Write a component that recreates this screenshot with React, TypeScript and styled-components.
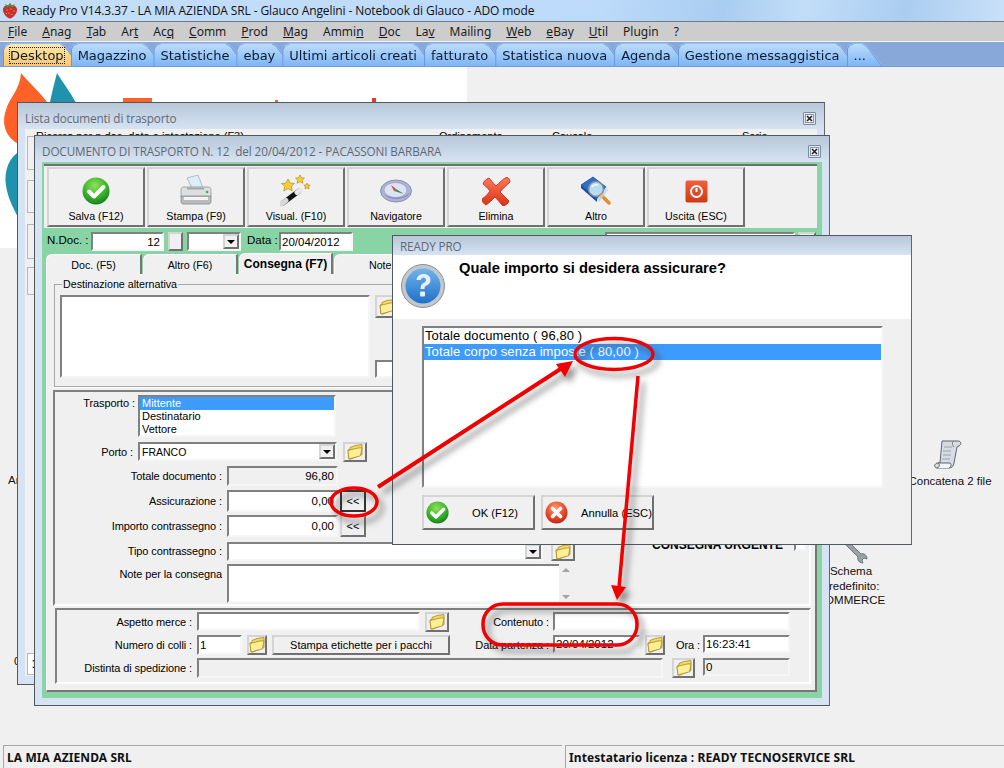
import React from "react";
import styled, { createGlobalStyle, css } from "styled-components";

const GlobalStyle = createGlobalStyle`
  * { box-sizing: border-box; }
  html, body { margin: 0; padding: 0; background: #f0f0f0; }
  body { font-family: "Liberation Sans", Arial, sans-serif; font-size: 11px; color: #000; }
`;

const sunken = css`
  background: #fff;
  border: 2px solid;
  border-color: #808080 #f6f6f6 #f6f6f6 #808080;
`;
const raised = css`
  background: #f0f0f0;
  border: 2px solid;
  border-color: #d4d4d4 #707070 #707070 #d4d4d4;
`;

const Page = styled.div`
  position: relative;
  width: 1004px;
  height: 768px;
  overflow: hidden;
  display: flex;
  flex-direction: column;
  background: #f0f0f0;
`;
const TitleBar = styled.div`
  height: 22px;
  display: flex;
  align-items: center;
  gap: 4px;
  padding-left: 2px;
  font: 12px "Open Sans", sans-serif;
  letter-spacing: -0.1px;
  color: #101010;
  border-bottom: 1px solid #6d7a88;
  background: linear-gradient(100deg, #c4def8 0%, #bcdafa 60%, #a9cdf0 72%, #c2ddf8 80%, #aacdf0 90%, #c9e0f8 100%);
`;
const MenuBar = styled.div`
  height: 20px;
  display: flex;
  align-items: center;
  gap: 15px;
  padding-left: 8px;
  background: #cdcdcd;
  border-bottom: 1px solid #f4f4f4;
  font: 12px "Noto Sans", sans-serif;
  color: #1c1c1c;
`;
const TabStrip = styled.div`
  height: 25px;
  display: flex;
  align-items: flex-end;
  padding-left: 4px;
  background: #87a8d8;
  border-bottom: 1px solid #6f9be0;
`;
const TabWrap = styled.div`
  margin-right: -7px;
  filter: drop-shadow(1px 0 0 #6b96dc) drop-shadow(-1px 0 0 #6b96dc) drop-shadow(0 -1px 0 #9fc0ee);
`;
const TabFace = styled.div<{ $active?: boolean }>`
  height: 22px;
  display: flex;
  align-items: center;
  padding: 0 15px 0 6px;
  font: 13px "DejaVu Sans", sans-serif;
  color: #0c1c30;
  white-space: nowrap;
  background: ${(p) =>
    p.$active ? "linear-gradient(#ffe9a8, #fbc66c)" : "linear-gradient(#bcdcfc, #7db6f4)"};
  clip-path: polygon(0 100%, 0 6px, 2px 2px, 7px 0, calc(100% - 19px) 0, calc(100% - 14px) 3px, 100% 100%);
`;
const FocusText = styled.span`
  outline: 1px dotted #222;
  outline-offset: 0;
`;
const Desktop = styled.div`
  position: relative;
  flex: 1;
  overflow: hidden;
`;
const LogoPanel = styled.svg`
  position: absolute;
  left: 0;
  top: 0;
`;
const DesktopText = styled.div<{ $x: number; $y: number; $w?: number }>`
  position: absolute;
  left: ${(p) => p.$x}px;
  top: ${(p) => p.$y}px;
  width: ${(p) => (p.$w ? `${p.$w}px` : "auto")};
  text-align: center;
  font-size: 11.5px;
  line-height: 14.5px;
  color: #111;
`;
const DesktopGlyph = styled.div<{ $x: number; $y: number }>`
  position: absolute;
  left: ${(p) => p.$x}px;
  top: ${(p) => p.$y}px;
`;
const Win = styled.div<{ $x: number; $y: number; $w: number; $h: number }>`
  position: absolute;
  left: ${(p) => p.$x}px;
  top: ${(p) => p.$y}px;
  width: ${(p) => p.$w}px;
  height: ${(p) => p.$h}px;
  display: flex;
  flex-direction: column;
  border: 1px solid #505860;
  border-right-color: #60666c;
  background: #d6e3f2;
`;
const WinTitle = styled.div<{ $h: number }>`
  height: ${(p) => p.$h}px;
  flex: none;
  display: flex;
  align-items: center;
  justify-content: space-between;
  padding: ${(p) => (p.$h > 20 ? 4 : 1)}px 8px 0 7px;
  font: 11.7px "Open Sans", sans-serif;
  letter-spacing: -0.1px;
  color: #5f6872;
  white-space: pre;
  background: linear-gradient(#b7c7d9, #d6e3f2);
`;
const CloseBox = styled.div`
  width: 13px;
  height: 13px;
  display: flex;
  align-items: center;
  justify-content: center;
  border: 1px solid #7d8ba0;
  border-radius: 1px;
  background: #dfe6ef;
`;
const BackBody = styled.div`
  flex: 1;
  margin: 0 7px 8px 7px;
  padding: 1px 2px;
  display: flex;
  flex-direction: column;
  background: #f0f0f0;
  overflow: hidden;
`;
const BackHead = styled.div`
  height: 6px;
  display: flex;
  line-height: 12px;
`;
const BackHeadItem = styled.span<{ $w: number; $ml?: number }>`
  width: ${(p) => p.$w}px;
  padding-left: ${(p) => p.$ml ?? 0}px;
  flex: none;
  white-space: nowrap;
`;
const Stub = styled.div<{ $h: number; $mt: number }>`
  width: 40px;
  height: ${(p) => p.$h}px;
  margin-top: ${(p) => p.$mt}px;
  border: 1px solid #b8b8b8;
  flex: none;
  line-height: 20px;
  font-size: 12px;
  padding-left: 4px;
`;
const StubField = styled(Stub)`
  margin-top: auto;
  margin-bottom: 0;
  background: #fff;
  font-weight: bold;
`;
const GreenFrame = styled.div`
  flex: 1;
  margin: 0 7px 7px 7px;
  padding: 2px 5px 6px 2px;
  display: flex;
  flex-direction: column;
  background: #88d4a4;
`;
const Toolbar = styled.div`
  height: 64px;
  flex: none;
  display: flex;
  gap: 2px;
  padding: 1px 0 0 3px;
  background: #f0f0f0;
  border-top: 2px solid #6f6f6f;
`;
const ToolButton = styled.div`
  ${raised}
  width: 98px;
  height: 60px;
  display: flex;
  flex-direction: column;
  align-items: center;
  justify-content: flex-end;
  padding-bottom: 3px;
  gap: 3px;
  font-size: 10.7px;
`;
const ToolIcon = styled.div`
  height: 32px;
  display: flex;
  align-items: center;
  justify-content: center;
`;
const DocRow = styled.div`
  height: 25px;
  flex: none;
  display: flex;
  align-items: flex-start;
  padding: 4px 0 0 3px;
  font-size: 11.5px;
`;
const DocLabel = styled.span<{ $w: number; $ml?: number }>`
  width: ${(p) => p.$w}px;
  margin-left: ${(p) => p.$ml ?? 0}px;
  flex: none;
  line-height: 17px;
  white-space: nowrap;
`;
const Field = styled.div<{ $w?: number; $h: number; $ml?: number; $grey?: boolean; $right?: boolean }>`
  ${sunken}
  width: ${(p) => (p.$w ? `${p.$w}px` : "auto")};
  height: ${(p) => p.$h}px;
  margin-left: ${(p) => p.$ml ?? 0}px;
  flex: none;
  display: flex;
  align-items: center;
  justify-content: ${(p) => (p.$right ? "flex-end" : "flex-start")};
  padding: 0 2px 0 1px;
  font-size: 11.5px;
  background: ${(p) => (p.$grey ? "#f0f0f0" : "#fff")};
  overflow: hidden;
  white-space: nowrap;
`;
const ComboText = styled.span`
  flex: 1;
  padding-left: 1px;
  font-size: 10.5px;
`;
const ComboArrow = styled.div`
  ${raised}
  width: 16px;
  height: 100%;
  flex: none;
  display: flex;
  align-items: center;
  justify-content: center;
  margin-right: -2px;
  &::after {
    content: "";
    border-left: 4px solid transparent;
    border-right: 4px solid transparent;
    border-top: 4px solid #000;
  }
`;
const FlatButton = styled.div<{ $w: number; $h: number; $ml?: number; $dark?: boolean }>`
  ${raised}
  width: ${(p) => p.$w}px;
  height: ${(p) => p.$h}px;
  margin-left: ${(p) => p.$ml ?? 0}px;
  flex: none;
  display: flex;
  align-items: center;
  justify-content: center;
  white-space: nowrap;
  ${(p) => p.$dark && "border-color: #333;"}
`;
const TabsRow = styled.div`
  height: 21px;
  flex: none;
  display: flex;
  align-items: flex-end;
  padding-left: 2px;
  gap: 1px;
`;
const SubTab = styled.div<{ $active?: boolean; $w: number }>`
  width: ${(p) => p.$w}px;
  height: ${(p) => (p.$active ? 21 : 20)}px;
  flex: none;
  display: flex;
  align-items: center;
  justify-content: center;
  background: #f0f0f0;
  border-top: 1px solid #fff;
  border-left: 1px solid #fff;
  border-right: 2px solid #777;
  border-top-left-radius: 6px;
  font-size: ${(p) => (p.$active ? 12 : 10.7)}px;
  font-weight: ${(p) => (p.$active ? "bold" : "normal")};
`;
const TabPanel = styled.div`
  flex: 1;
  margin-left: 2px;
  padding: 0 4px 4px 6px;
  display: flex;
  flex-direction: column;
  background: #f0f0f0;
  border-left: 1px solid #fff;
  border-right: 2px solid #777;
  border-bottom: 2px solid #777;
`;
const AltFieldset = styled.fieldset`
  margin: 4px 0 0 1px;
  height: 109px;
  flex: none;
  padding: 4px 5px 0 5px;
  display: flex;
  border: 1px solid #a8a8a8;
  box-shadow: 1px 1px 0 #fff;
`;
const AltLegend = styled.legend`
  padding: 0 1px;
  margin-left: 2px;
  font-size: 10.7px;
  line-height: 13px;
`;
const AltArea = styled.div`
  display: flex;
  gap: 5px;
  height: 83px;
`;
const AltBox = styled.div`
  ${sunken}
  width: 310px;
  height: 83px;
  flex: none;
`;
const AltSide = styled.div`
  display: flex;
  flex-direction: column;
  justify-content: space-between;
  align-items: flex-start;
`;
const Group = styled.div<{ $h: number; $ml: number; $mt: number }>`
  height: ${(p) => p.$h}px;
  margin: ${(p) => p.$mt}px 0 0 ${(p) => p.$ml}px;
  flex: none;
  padding-top: 2px;
  display: flex;
  flex-direction: column;
  border: 2px solid;
  border-color: #808080 #fff #fff #808080;
`;
const Row = styled.div<{ $mt: number }>`
  display: flex;
  align-items: flex-start;
  margin-top: ${(p) => p.$mt}px;
`;
const Label = styled.div<{ $w: number; $gap?: number; $pt?: number }>`
  width: ${(p) => p.$w}px;
  margin-right: ${(p) => p.$gap ?? 5}px;
  padding-top: ${(p) => p.$pt ?? 3}px;
  flex: none;
  text-align: right;
  line-height: 14px;
  font-size: 11px;
  letter-spacing: -0.1px;
  white-space: nowrap;
`;
const ListBox = styled.div`
  ${sunken}
  width: 198px;
  height: 42px;
  flex: none;
  font-size: 11px;
  line-height: 13px;
`;
const ListItem = styled.div<{ $on?: boolean }>`
  padding-left: 2px;
  color: ${(p) => (p.$on ? "#fff" : "#000")};
  background: ${(p) => (p.$on ? "#3d9bfd" : "transparent")};
`;
const UrgentText = styled.div`
  margin: -4px 0 0 77px;
  font-weight: bold;
  font-size: 12px;
  line-height: 14px;
  white-space: nowrap;
`;
const UrgentCheck = styled.div`
  ${sunken}
  width: 12px;
  height: 12px;
  margin: -3px 0 0 11px;
  flex: none;
`;
const NoteBox = styled.div`
  ${sunken}
  width: 346px;
  height: 39px;
  flex: none;
  display: flex;
  justify-content: flex-end;
`;
const NoteScroll = styled.div`
  width: 14px;
  margin: -2px -2px -2px 0;
  background: #f0f0f0;
  display: flex;
  flex-direction: column;
  align-items: center;
  justify-content: space-between;
  padding: 4px 0;
  &::before {
    content: "";
    border-left: 4px solid transparent;
    border-right: 4px solid transparent;
    border-bottom: 4px solid #a4a4a4;
  }
  &::after {
    content: "";
    border-left: 4px solid transparent;
    border-right: 4px solid transparent;
    border-top: 4px solid #a4a4a4;
  }
`;
const StampaButton = styled(FlatButton)`
  font-size: 11px;
  padding-right: 0;
`;
const DialogHead = styled.div`
  height: 64px;
  flex: none;
  display: flex;
  padding: 9px 0 0 8px;
  background: #fff;
`;
const DialogQuestion = styled.div`
  margin: -4px 0 0 14px;
  font-size: 14.7px;
  line-height: 16px;
  font-weight: bold;
`;
const DialogBody = styled.div`
  flex: 1;
  padding: 8px 0 0 29px;
  background: #f0f0f0;
`;
const BigList = styled.div`
  ${sunken}
  width: 461px;
  height: 162px;
  margin-top: -1px;
  font-size: 13px;
  line-height: 16px;
`;
const BigItem = styled.div<{ $on?: boolean }>`
  padding-left: 1px;
  letter-spacing: 0.1px;
  color: ${(p) => (p.$on ? "#fff" : "#000")};
  background: ${(p) => (p.$on ? "#3d9bfd" : "transparent")};
`;
const DialogButtons = styled.div`
  display: flex;
  gap: 6px;
  margin-top: 7px;
`;
const DialogButton = styled.div<{ $text: number }>`
  ${raised}
  width: 113px;
  height: 35px;
  display: flex;
  align-items: center;
  padding-left: 2px;
  gap: ${(p) => p.$text}px;
  font-size: 11.2px;
  white-space: nowrap;
`;
const StatusBar = styled.div`
  height: 23px;
  flex: none;
  display: flex;
  gap: 3px;
  padding-left: 3px;
  background: #f0f0f0;
`;
const StatusCell = styled.div<{ $w?: number }>`
  ${(p) => (p.$w ? `width: ${p.$w}px;` : "flex: 1;")}
  display: flex;
  align-items: center;
  padding-left: 3px;
  border-top: 1px solid #a8a8a8;
  border-left: 1px solid #a8a8a8;
  font: bold 12px "Noto Sans", sans-serif;
  letter-spacing: 0.1px;
  color: #111;
`;
const Overlay = styled.svg`
  position: absolute;
  left: 0;
  top: 0;
  pointer-events: none;
  filter: drop-shadow(5px 6px 3px rgba(60, 60, 60, 0.55));
`;

const Strawberry = () => (
  <svg width="16" height="17" viewBox="0 0 16 17">
    <path d="M8 3.5C12 2.5 15.5 4.5 15 8.5 14.5 12 11 16 8 16.500 5 16 1.500 12 1 8.500 .5 4.500 4 2.500 8 3.500Z" fill="#c9302a" />
    <path d="M3 2l3 1.500L8 .8l2 2.700 3-1.500-1.500 3.300-3.500-1-3.500 1z" fill="#5a8f3a" />
    <g fill="#f3c9a0">
      <circle cx="5" cy="8" r=".6" /><circle cx="9" cy="7" r=".6" /><circle cx="12" cy="9" r=".6" />
      <circle cx="7" cy="11" r=".6" /><circle cx="10" cy="12.500" r=".6" /><circle cx="4.500" cy="11.500" r=".6" />
    </g>
  </svg>
);

const CloseGlyph = () => (
  <svg width="9" height="9" viewBox="0 0 9 9">
    <rect x=".5" y=".5" width="8" height="8" fill="#eef2f7" stroke="#8a97a8" />
    <path d="M2 2l5 5M7 2L2 7" stroke="#222" strokeWidth="1.600" />
  </svg>
);

const GreenCheck = ({ size, id }: { size: number; id: string }) => (
  <svg width={size} height={size} viewBox="0 0 28 28">
    <defs>
      <radialGradient id={id} cx="45%" cy="30%" r="75%">
        <stop offset="0" stopColor="#8fe05c" />
        <stop offset=".55" stopColor="#3fb52e" />
        <stop offset="1" stopColor="#0d7a1a" />
      </radialGradient>
    </defs>
    <circle cx="14" cy="14" r="13.500" fill={`url(#${id})`} />
    <path d="M7 14.500l5 5 9.500-9.500" fill="none" stroke="#fff" strokeWidth="4" strokeLinecap="round" strokeLinejoin="round" />
  </svg>
);

const RedBallX = () => (
  <svg width="23" height="23" viewBox="0 0 23 23">
    <defs>
      <radialGradient id="ballx" cx="45%" cy="30%" r="75%">
        <stop offset="0" stopColor="#ff9a66" />
        <stop offset=".6" stopColor="#e8452a" />
        <stop offset="1" stopColor="#b52412" />
      </radialGradient>
    </defs>
    <circle cx="11.500" cy="11.500" r="11" fill="url(#ballx)" />
    <path d="M7.500 7.500l8 8M15.500 7.500l-8 8" stroke="#fff" strokeWidth="3.600" strokeLinecap="round" />
  </svg>
);

const Printer = () => (
  <svg width="32" height="32" viewBox="0 0 32 32">
    <path d="M7 3l11-3 5 13H12z" fill="#dcecf8" stroke="#8ea6ba" strokeWidth=".7" />
    <path d="M1 15c0-2 1-3 3-3h24c2 0 3 1 3 3v7H1z" fill="#dcdee0" stroke="#8c8e90" strokeWidth=".7" />
    <path d="M1 21h30v6c0 1-1 2-2 2H3c-1 0-2-1-2-2z" fill="#b8babc" stroke="#808284" strokeWidth=".7" />
    <rect x="4" y="22" width="24" height="3" fill="#f4f4f4" />
    <rect x="7" y="12.500" width="17" height="2" fill="#a4a6a8" />
    <circle cx="27" cy="17" r="1.300" fill="#3fb05a" />
  </svg>
);

const Wand = () => (
  <svg width="32" height="32" viewBox="0 0 32 32">
    <path d="M3 28L19 16" stroke="#111" strokeWidth="5" strokeLinecap="round" />
    <path d="M1.500 29L6 25.500" stroke="#d8d8d8" strokeWidth="5" strokeLinecap="round" />
    <path d="M17 17.500l3-2.200" stroke="#e8e8e8" strokeWidth="5" strokeLinecap="round" />
    <path d="M8 4l2.200 4 4.300.4-3.200 3 .9 4.500L8 13.500 3.800 16l.9-4.500-3.200-3 4.300-.4z" fill="#f6cf35" stroke="#a8801a" strokeWidth=".6" />
    <path d="M20 0l1.500 2.800 3 .3-2.200 2.100.6 3.100L20 6.700l-2.900 1.600.6-3.100-2.200-2.100 3-.3z" fill="#f6cf35" stroke="#a8801a" strokeWidth=".6" />
    <path d="M27 8l1 2 2.200.2-1.600 1.500.4 2.200L27 12.800l-2 1.100.4-2.200-1.600-1.500L26 10z" fill="#f6cf35" stroke="#a8801a" strokeWidth=".6" />
  </svg>
);

const Compass = () => (
  <svg width="32" height="26" viewBox="0 0 32 26">
    <ellipse cx="16" cy="13" rx="15.500" ry="11" fill="#aeb3d6" stroke="#7f84ac" strokeWidth=".8" />
    <ellipse cx="15.500" cy="12" rx="11.500" ry="7.500" fill="#dfe2f2" stroke="#8b90b8" strokeWidth=".6" />
    <path d="M4 15c4 6 20 7 26-1-3 9-23 9-26 1z" fill="#8288b4" />
    <path d="M11 7l5 4-2 2z" fill="#e04030" />
    <path d="M14 13l2-2 8 5z" fill="#2e9a48" />
  </svg>
);

const BigRedX = () => (
  <svg width="29" height="29" viewBox="0 0 29 29">
    <defs>
      <linearGradient id="redx" x1="0" y1="0" x2="0" y2="1">
        <stop offset="0" stopColor="#ff7a58" />
        <stop offset="1" stopColor="#dc3018" />
      </linearGradient>
    </defs>
    <path d="M1 7c1-3 3-5 6-6 2 2 4 5 7 8 4-4 7-7 11-9 2 1 3 3 3 5-3 3-7 6-10 10 3 3 6 6 9 9-1 3-3 4-6 5-3-3-5-6-8-9-3 3-6 6-9 8-2-1-4-3-4-6 3-2 6-5 8-8-2-3-5-5-7-7z" fill="url(#redx)" stroke="#b82814" strokeWidth=".8" />
  </svg>
);

const BookLens = () => (
  <svg width="32" height="30" viewBox="0 0 32 30">
    <path d="M1 9L13 1l13 10-9 12z" fill="#2c6fd0" stroke="#144a9a" strokeWidth=".8" />
    <path d="M1 9l16 14v3L1 12z" fill="#174f9f" />
    <path d="M17 23l9-12 2 3-9 12z" fill="#c9d8ea" />
    <circle cx="16" cy="13" r="7.500" fill="#b9dcf2" stroke="#7c8a98" strokeWidth="1.500" />
    <path d="M12 11c1-2 4-3 6-2" stroke="#fff" strokeWidth="1.500" fill="none" />
    <path d="M21 19l8 8" stroke="#e88a30" strokeWidth="3.500" strokeLinecap="round" />
    <path d="M21 19l2 2" stroke="#c8c8c8" strokeWidth="3.500" />
  </svg>
);

const PowerTile = () => (
  <svg width="23" height="23" viewBox="0 0 23 23">
    <defs>
      <linearGradient id="pwr" x1="0" y1="0" x2="0" y2="1">
        <stop offset="0" stopColor="#f0603a" />
        <stop offset="1" stopColor="#d03a14" />
      </linearGradient>
    </defs>
    <rect x=".5" y=".5" width="22" height="22" rx="2" fill="url(#pwr)" />
    <circle cx="11.500" cy="11.500" r="5.500" fill="none" stroke="#fff" strokeWidth="2" />
    <path d="M11.500 8v4" stroke="#fff" strokeWidth="2" />
  </svg>
);

const Folder = () => (
  <svg width="16" height="16" viewBox="0 0 16 16">
    <path d="M1 6l2-.5V3.500l5-2 7-1v10L4 15H2z" fill="#f4d860" stroke="#a88a20" strokeWidth=".8" />
    <path d="M1 6.500L11 4l4-.2-1.500 8L2 15z" fill="#fdee98" stroke="#a88a20" strokeWidth=".8" />
  </svg>
);

const QuestionBall = () => (
  <svg width="44" height="44" viewBox="0 0 44 44">
    <defs>
      <linearGradient id="qball" x1="0" y1="0" x2="0" y2="1">
        <stop offset="0" stopColor="#6fb4ec" />
        <stop offset="1" stopColor="#1f70c8" />
      </linearGradient>
    </defs>
    <circle cx="22" cy="22" r="21.500" fill="#c4c8cc" stroke="#8c9094" />
    <circle cx="22" cy="22" r="17.500" fill="url(#qball)" />
    <path d="M15.500 16c.5-4 3.500-6 7-6 4 0 7 2.500 7 6 0 3-2 4.500-4 5.500-1.500.8-2 1.500-2 3.500h-4c0-3.500 1-5 3-6 1.500-.8 2.500-1.500 2.500-3 0-1.500-1-2.500-2.500-2.500s-2.500 1-2.800 2.500z" fill="#e8eef6" />
    <rect x="19" y="27.500" width="5" height="5" rx="1" fill="#e8eef6" />
  </svg>
);

const ScrollIcon = () => (
  <svg width="32" height="32" viewBox="0 0 32 32">
    <path d="M9 2h16c3 0 4 3 1 5l-2 1-3 16c-.5 3-2 5-5 5H4c-3 0-3-4 0-5h3z" fill="#d7dbe2" stroke="#5e6672" strokeWidth="1" />
    <path d="M21 2c-2 1-2 4 0 6M4 29c3-1 3-4 1-5h12c2 1 1 4-1 5" fill="#f2f4f7" stroke="#5e6672" strokeWidth="1" />
    <path d="M11 8h8M10 12h8M10 16h8M9 20h8" stroke="#9aa2ae" strokeWidth="1" />
  </svg>
);

const Wrench = () => (
  <svg width="26" height="26" viewBox="0 0 26 26">
    <path d="M2 2c3 0 5 1 6 3l11 11c3-1 6 1 6 5l-3-1-2 2 1 3c-4 0-6-3-5-6L5 8C3 7 2 5 2 2z" fill="#9aa0a8" stroke="#5f656c" strokeWidth=".8" />
  </svg>
);

const BrandLogo = () => (
  <LogoPanel width="467" height="181" viewBox="0 67 467 181">
    <rect x="0" y="67" width="467" height="181" fill="#fff" />
    <path d="M21 73c8 10 20 20 28 32l-10 14c-4-8-10-14-14-14-8 6-10 22-2 34l-4 5C6 138 1 124 6 110 9 98 20 90 21 73z" fill="#ff6128" />
    <path d="M57 73c6 10 14 20 19 30l-28 12c2-16 6-30 9-42z" fill="#1f93ad" />
    <path d="M17 153c-10 8-14 22-10 38 3 12 9 22 13 30l2-60z" fill="#1f93ad" />
    <rect x="123" y="98" width="29" height="6" fill="#ff6128" />
    <rect x="372" y="98" width="4" height="6" fill="#ea3a20" />
    <rect x="275" y="100" width="3" height="4" fill="#ff6128" />
  </LogoPanel>
);

const menu: [string, string, string][] = [
  ["", "F", "ile"], ["", "A", "nag"], ["", "T", "ab"], ["Ar", "t", ""], ["Ac", "q", ""],
  ["", "C", "omm"], ["", "P", "rod"], ["", "M", "ag"], ["Ammi", "n", ""], ["", "D", "oc"],
  ["La", "v", ""], ["Mailing", "", ""], ["", "W", "eb"], ["", "e", "Bay"], ["", "U", "til"],
  ["Plugin", "", ""], ["?", "", ""],
];
const tabs = ["Magazzino", "Statistiche", "ebay", "Ultimi articoli creati", "fatturato", "Statistica nuova", "Agenda", "Gestione messaggistica", "..."];

const FolderButton = ({ w, h, ml }: { w: number; h: number; ml?: number }) => (
  <FlatButton $w={w} $h={h} $ml={ml}>
    <Folder />
  </FlatButton>
);

export default function App() {
  return (
    <Page>
      <GlobalStyle />
      <TitleBar>
        <Strawberry />
        <span>Ready Pro V14.3.37 - LA MIA AZIENDA SRL - Glauco Angelini - Notebook di Glauco - ADO mode</span>
      </TitleBar>
      <MenuBar>
        {menu.map(([a, u, b], i) => (
          <span key={i}>
            {a}
            {u && <u>{u}</u>}
            {b}
          </span>
        ))}
      </MenuBar>
      <TabStrip>
        <TabWrap>
          <TabFace $active>
            <FocusText>Desktop</FocusText>
          </TabFace>
        </TabWrap>
        {tabs.map((t) => (
          <TabWrap key={t}>
            <TabFace>{t}</TabFace>
          </TabWrap>
        ))}
      </TabStrip>

      <Desktop>
        <BrandLogo />
        <DesktopText $x={8} $y={406}>Archivio</DesktopText>
        <DesktopText $x={14} $y={587}>0</DesktopText>
        <DesktopGlyph $x={933} $y={372}>
          <ScrollIcon />
        </DesktopGlyph>
        <DesktopText $x={900} $y={407} $w={100}>Concatena 2 file</DesktopText>
        <DesktopGlyph $x={842} $y={471}>
          <Wrench />
        </DesktopGlyph>
        <DesktopText $x={811} $y={497} $w={80}>
          Schema
          <br />
          predefinito:
          <br />
          COMMERCE
        </DesktopText>

        {/* finestra dietro */}
        <Win $x={17} $y={35} $w={808} $h={583}>
          <WinTitle $h={26}>
            <span>Lista documenti di trasporto</span>
            <CloseBox>
              <CloseGlyph />
            </CloseBox>
          </WinTitle>
          <BackBody>
            <BackHead>
              <BackHeadItem $w={412} $ml={9}>Ricerca per n.doc, data e intestazione (F3)</BackHeadItem>
              <BackHeadItem $w={113}>Ordinamento</BackHeadItem>
              <BackHeadItem $w={190}>Causale</BackHeadItem>
              <BackHeadItem $w={40}>Serie</BackHeadItem>
            </BackHead>
            <Stub $h={34} $mt={0} />
            <Stub $h={33} $mt={10} />
            <Stub $h={35} $mt={11} />
            <Stub $h={28} $mt={8} />
            <StubField $h={22} $mt={0}>1</StubField>
          </BackBody>
        </Win>

        {/* finestra documento */}
        <Win $x={34} $y={68} $w={796} $h={571}>
          <WinTitle $h={26}>
            <span>DOCUMENTO DI TRASPORTO N. 12  del 20/04/2012 - PACASSONI BARBARA</span>
            <CloseBox>
              <CloseGlyph />
            </CloseBox>
          </WinTitle>
          <GreenFrame>
            <Toolbar>
              <ToolButton><ToolIcon><GreenCheck size={28} id="ck1" /></ToolIcon>Salva (F12)</ToolButton>
              <ToolButton><ToolIcon><Printer /></ToolIcon>Stampa (F9)</ToolButton>
              <ToolButton><ToolIcon><Wand /></ToolIcon>Visual. (F10)</ToolButton>
              <ToolButton><ToolIcon><Compass /></ToolIcon>Navigatore</ToolButton>
              <ToolButton><ToolIcon><BigRedX /></ToolIcon>Elimina</ToolButton>
              <ToolButton><ToolIcon><BookLens /></ToolIcon>Altro</ToolButton>
              <ToolButton><ToolIcon><PowerTile /></ToolIcon>Uscita (ESC)</ToolButton>
            </Toolbar>
            <DocRow>
              <DocLabel $w={44}>N.Doc. :</DocLabel>
              <Field $w={73} $h={19} $right>12</Field>
              <FlatButton $w={15} $h={19} $ml={4} />
              <Field $w={54} $h={19} $ml={4}>
                <ComboText />
                <ComboArrow />
              </Field>
              <DocLabel $w={32} $ml={6}>Data :</DocLabel>
              <Field $w={74} $h={19}>20/04/2012</Field>
              <Field $w={190} $h={19} $ml={252} />
              <FlatButton $w={18} $h={19} $ml={3} />
            </DocRow>
            <TabsRow>
              <SubTab $w={96}>Doc. (F5)</SubTab>
              <SubTab $w={95}>Altro (F6)</SubTab>
              <SubTab $w={94} $active>Consegna (F7)</SubTab>
              <SubTab $w={116}>Note (F8)</SubTab>
            </TabsRow>
            <TabPanel>
              <AltFieldset>
                <AltLegend>Destinazione alternativa</AltLegend>
                <AltArea>
                  <AltBox />
                  <AltSide>
                    <FolderButton w={24} h={23} />
                    <Field $w={60} $h={18} />
                  </AltSide>
                </AltArea>
              </AltFieldset>
              <Group $h={216} $ml={0} $mt={3}>
                <Row $mt={1}>
                  <Label $w={80} $gap={3} $pt={1}>Trasporto :</Label>
                  <ListBox>
                    <ListItem $on>Mittente</ListItem>
                    <ListItem>Destinatario</ListItem>
                    <ListItem>Vettore</ListItem>
                  </ListBox>
                </Row>
                <Row $mt={5}>
                  <Label $w={78} $gap={5}>Porto :</Label>
                  <Field $w={199} $h={19}>
                    <ComboText>FRANCO</ComboText>
                    <ComboArrow />
                  </Field>
                  <FolderButton w={24} h={20} ml={6} />
                </Row>
                <Row $mt={4}>
                  <Label $w={167}>Totale documento :</Label>
                  <Field $w={111} $h={20} $grey $right>96,80</Field>
                </Row>
                <Row $mt={4}>
                  <Label $w={167} $pt={4}>Assicurazione :</Label>
                  <Field $w={111} $h={22} $right>0,00</Field>
                  <FlatButton $w={26} $h={22} $ml={2} $dark>&lt;&lt;</FlatButton>
                </Row>
                <Row $mt={3}>
                  <Label $w={167} $pt={4}>Importo contrassegno :</Label>
                  <Field $w={111} $h={22} $right>0,00</Field>
                  <FlatButton $w={26} $h={22} $ml={2}>&lt;&lt;</FlatButton>
                </Row>
                <Row $mt={5}>
                  <Label $w={167} $pt={2}>Tipo contrassegno :</Label>
                  <Field $w={316} $h={19}>
                    <ComboText />
                    <ComboArrow />
                  </Field>
                  <FolderButton w={24} h={19} ml={8} />
                  <UrgentText>CONSEGNA URGENTE</UrgentText>
                  <UrgentCheck />
                </Row>
                <Row $mt={3}>
                  <Label $w={167} $pt={3}>Note per la consegna</Label>
                  <NoteBox>
                    <NoteScroll />
                  </NoteBox>
                </Row>
              </Group>
              <Group $h={76} $ml={2} $mt={2}>
                <Row $mt={0}>
                  <Label $w={135}>Aspetto merce :</Label>
                  <Field $w={223} $h={19} />
                  <FolderButton w={24} h={20} ml={5} />
                  <Label $w={100} $gap={4}>Contenuto :</Label>
                  <Field $w={237} $h={19} />
                </Row>
                <Row $mt={3}>
                  <Label $w={135}>Numero di colli :</Label>
                  <Field $w={45} $h={20}>1</Field>
                  <FolderButton w={20} h={20} ml={5} />
                  <StampaButton $w={178} $h={20} $ml={5}>Stampa etichette per i pacchi</StampaButton>
                  <Label $w={99} $gap={4}>Data partenza :</Label>
                  <Field $w={87} $h={18}>20/04/2012</Field>
                  <FolderButton w={20} h={20} ml={5} />
                  <Label $w={35} $gap={3}>Ora :</Label>
                  <Field $w={87} $h={18}>16:23:41</Field>
                </Row>
                <Row $mt={3}>
                  <Label $w={135}>Distinta di spedizione :</Label>
                  <Field $w={466} $h={20} $grey />
                  <FolderButton w={23} h={20} ml={9} />
                  <Field $w={87} $h={18} $ml={8} $grey>0</Field>
                </Row>
              </Group>
            </TabPanel>
          </GreenFrame>
        </Win>

        {/* richiesta */}
        <Win $x={392} $y={168} $w={520} $h={310}>
          <WinTitle $h={19}>
            <span>READY PRO</span>
          </WinTitle>
          <DialogHead>
            <QuestionBall />
            <DialogQuestion>Quale importo si desidera assicurare?</DialogQuestion>
          </DialogHead>
          <DialogBody>
            <BigList>
              <BigItem>Totale documento ( 96,80 )</BigItem>
              <BigItem $on>Totale corpo senza imposte ( 80,00 )</BigItem>
            </BigList>
            <DialogButtons>
              <DialogButton $text={23}>
                <GreenCheck size={23} id="ck2" />
                OK (F12)
              </DialogButton>
              <DialogButton $text={13}>
                <RedBallX />
                Annulla (ESC)
              </DialogButton>
            </DialogButtons>
          </DialogBody>
        </Win>
      </Desktop>

      <StatusBar>
        <StatusCell $w={559}>LA MIA AZIENDA SRL</StatusCell>
        <StatusCell>Intestatario licenza : READY TECNOSERVICE SRL</StatusCell>
      </StatusBar>

      <Overlay width="1004" height="768" viewBox="0 0 1004 768">
        <g fill="none" stroke="#f00000" strokeWidth="3.500">
          <ellipse cx="354" cy="502" rx="23" ry="14" />
          <ellipse cx="614" cy="354" rx="39" ry="15.500" />
          <rect x="483" y="604" width="154" height="41" rx="20" />
        </g>
        <path d="M378 487L562 368" stroke="#f00000" strokeWidth="4" fill="none" />
        <path d="M573 361L556 364 565 377z" fill="#f00000" />
        <path d="M638 376L619 588" stroke="#f00000" strokeWidth="3.500" fill="none" />
        <path d="M617 600L611 585 626 587z" fill="#f00000" />
      </Overlay>
    </Page>
  );
}
